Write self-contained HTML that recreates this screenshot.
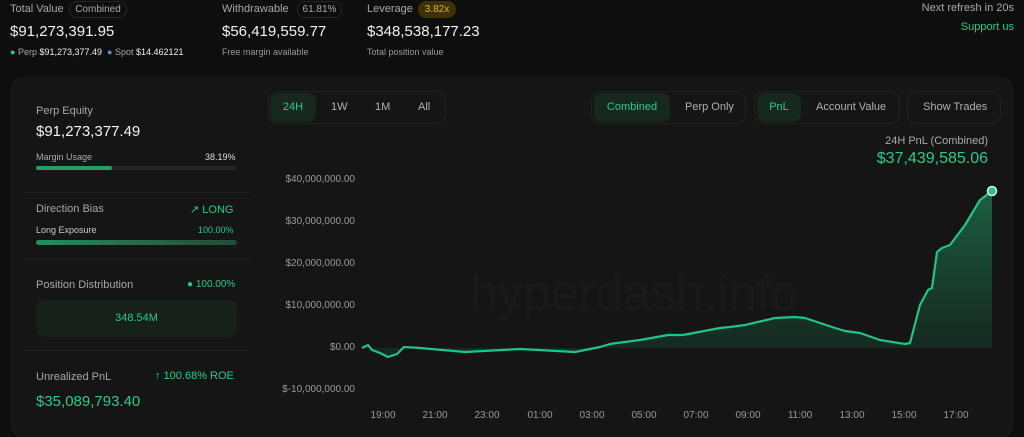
<!DOCTYPE html>
<html><head><meta charset="utf-8"><style>
*{margin:0;padding:0;box-sizing:border-box}
body{width:1024px;height:429px;background:#0e0e0e;font-family:"Liberation Sans",sans-serif;color:#e8e8e8;position:relative;overflow:hidden}
.a{position:absolute;white-space:nowrap}
.lbl{color:#a8a8a8;font-size:11px}
.big{font-size:15px;color:#f2f2f2}
.pill{position:absolute;border:1px solid #262626;border-radius:8px;font-size:10px;color:#aaa;text-align:center}
.grp{position:absolute;border:1px solid #222;border-radius:10px;height:33px;top:91px}
.act{position:absolute;background:#17281f;border-radius:8px;height:29px;top:1px;color:#2ec98a;font-size:11px;text-align:center;line-height:29px}
.t{position:absolute;top:0;line-height:31px;font-size:11px;color:#b0b0b0}
.ax{position:absolute;font-size:10px;color:#9a9a9a}
</style></head><body>
<div class="a lbl" style="left:10px;top:3px">Total Value</div>
<div class="pill" style="left:69px;top:1px;width:58px;height:17px;line-height:15px">Combined</div>
<div class="a big" style="left:10px;top:23px">$91,273,391.95</div>
<div class="a" style="left:10px;top:47px;font-size:9px;color:#aaa"><span style="color:#2ec98a">●</span> Perp <span style="color:#eee">$91,273,377.49</span> &nbsp;<span style="color:#5b8fd6">●</span> Spot <span style="color:#eee">$14.462121</span></div>
<div class="a lbl" style="left:222px;top:3px">Withdrawable</div>
<div class="pill" style="left:297px;top:1px;width:45px;height:17px;line-height:15px">61.81%</div>
<div class="a big" style="left:222px;top:23px">$56,419,559.77</div>
<div class="a" style="left:222px;top:47px;font-size:9px;color:#999">Free margin available</div>
<div class="a lbl" style="left:367px;top:3px">Leverage</div>
<div class="pill" style="left:418px;top:1px;width:38px;height:17px;line-height:15px;background:#3d3108;border-color:#3d3108;color:#e0b020">3.82x</div>
<div class="a big" style="left:367px;top:23px">$348,538,177.23</div>
<div class="a" style="left:367px;top:47px;font-size:9px;color:#999">Total position value</div>
<div class="a" style="right:10px;top:2px;font-size:11px;color:#aaa">Next refresh in 20s</div>
<div class="a" style="right:10px;top:21px;font-size:11px;color:#2ec98a">Support us</div>

<div class="a" style="left:10px;top:77px;width:1004px;height:360px;background:#151515;border-radius:12px"></div>

<div class="a lbl" style="left:36px;top:105px">Perp Equity</div>
<div class="a" style="left:36px;top:123px;font-size:15px;color:#f2f2f2">$91,273,377.49</div>
<div class="a" style="left:36px;top:152px;font-size:9px;color:#aaa">Margin Usage</div>
<div class="a" style="left:205px;top:152px;font-size:9px;color:#ddd">38.19%</div>
<div class="a" style="left:36px;top:166px;width:201px;height:4px;background:#242424;border-radius:2px"><div style="width:76px;height:4px;background:#2a9d6a;border-radius:2px"></div></div>
<div class="a" style="left:24px;top:192px;width:226px;height:1px;background:#1f1f1f"></div>
<div class="a lbl" style="left:36px;top:203px">Direction Bias</div>
<div class="a" style="left:190px;top:203px;font-size:11px;color:#2ec98a">↗ LONG</div>
<div class="a" style="left:36px;top:225px;font-size:9px;color:#ccc">Long Exposure</div>
<div class="a" style="left:198px;top:225px;font-size:9px;color:#2ec98a">100.00%</div>
<div class="a" style="left:36px;top:240px;width:201px;height:5px;background:linear-gradient(90deg,#2a8a5e,#234a38);border-radius:3px"></div>
<div class="a" style="left:24px;top:258px;width:226px;height:1px;background:#1f1f1f"></div>
<div class="a lbl" style="left:36px;top:279px">Position Distribution</div>
<div class="a" style="left:187px;top:279px;font-size:10px;color:#2ec98a">● 100.00%</div>
<div class="a" style="left:36px;top:300px;width:201px;height:37px;background:#172019;border-radius:8px;color:#2ec98a;font-size:11px;text-align:center;line-height:37px">348.54M</div>
<div class="a" style="left:24px;top:350px;width:226px;height:1px;background:#1f1f1f"></div>
<div class="a lbl" style="left:36px;top:371px">Unrealized PnL</div>
<div class="a" style="left:155px;top:370px;font-size:11px;color:#2ec98a">↑ 100.68% ROE</div>
<div class="a" style="left:36px;top:393px;font-size:15px;color:#2ec98a">$35,089,793.40</div>

<div class="grp" style="left:268px;width:178px"><div class="act" style="left:1px;width:46px">24H</div><div class="t" style="left:62px">1W</div><div class="t" style="left:106px">1M</div><div class="t" style="left:149px">All</div></div>
<div class="grp" style="left:591px;width:155px"><div class="act" style="left:2px;width:76px">Combined</div><div class="t" style="left:93px">Perp Only</div></div>
<div class="grp" style="left:754px;width:146px"><div class="act" style="left:2px;width:44px">PnL</div><div class="t" style="left:61px">Account Value</div></div>
<div class="grp" style="left:907px;width:94px"><div class="t" style="left:15px">Show Trades</div></div>
<div class="a" style="right:36px;top:135px;font-size:11px;color:#aaa">24H PnL (Combined)</div>
<div class="a" style="right:36px;top:150px;font-size:16px;color:#2ec98a">$37,439,585.06</div>

<div class="a" style="left:470px;top:264px;font-size:50px;color:#1a1a1a">hyperdash.info</div>
<div class="ax" style="right:669px;top:174px">$40,000,000.00</div>
<div class="ax" style="right:669px;top:216px">$30,000,000.00</div>
<div class="ax" style="right:669px;top:258px">$20,000,000.00</div>
<div class="ax" style="right:669px;top:300px">$10,000,000.00</div>
<div class="ax" style="right:669px;top:342px">$0.00</div>
<div class="ax" style="right:669px;top:384px">$-10,000,000.00</div>
<svg class="a" style="left:0;top:0" width="1024" height="429">
<defs><linearGradient id="g" x1="0" y1="0" x2="0" y2="1"><stop offset="0" stop-color="#1f7a52" stop-opacity=".75"/><stop offset="1" stop-color="#163a2a" stop-opacity=".5"/></linearGradient></defs>
<path d="M362,348 L368,345 L372,350 L380,353 L388,357 L397,354 L404,347 L420,348 L465,352 L520,349 L575,352 L600,347 L610,344 L617,343 L640,340 L668,335 L683,335 L720,328 L730,327 L745,325 L775,318 L795,317 L805,318 L835,328 L845,331 L860,333 L880,340 L905,344 L910,343 L920,305 L928,290 L932,288 L937,252 L942,248 L950,245 L965,225 L980,200 L992,191 L992,348 Z" fill="url(#g)"/>
<path d="M362,348 L368,345 L372,350 L380,353 L388,357 L397,354 L404,347 L420,348 L465,352 L520,349 L575,352 L600,347 L610,344 L617,343 L640,340 L668,335 L683,335 L720,328 L730,327 L745,325 L775,318 L795,317 L805,318 L835,328 L845,331 L860,333 L880,340 L905,344 L910,343 L920,305 L928,290 L932,288 L937,252 L942,248 L950,245 L965,225 L980,200 L992,191" fill="none" stroke="#22c384" stroke-width="2.2" stroke-linejoin="round"/>
<circle cx="992" cy="191" r="4.5" fill="#22c384" stroke="#e8e8e8" stroke-width="1.5"/>
<g font-family="Liberation Sans" font-size="10" fill="#9a9a9a" text-anchor="middle">
<text x="383" y="418">19:00</text><text x="435" y="418">21:00</text><text x="487" y="418">23:00</text><text x="540" y="418">01:00</text><text x="592" y="418">03:00</text><text x="644" y="418">05:00</text><text x="696" y="418">07:00</text><text x="748" y="418">09:00</text><text x="800" y="418">11:00</text><text x="852" y="418">13:00</text><text x="904" y="418">15:00</text><text x="956" y="418">17:00</text></g>
</svg>
</body></html>
